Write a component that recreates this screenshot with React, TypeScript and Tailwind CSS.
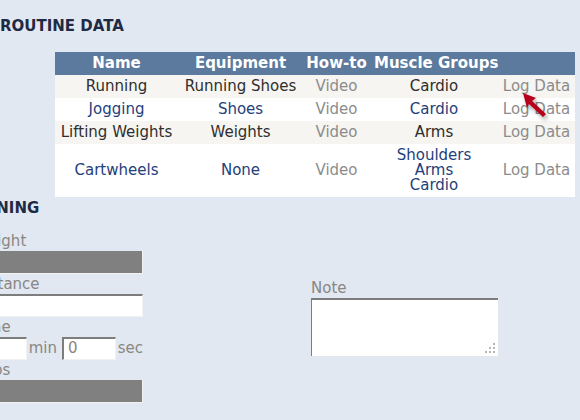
import React from 'react';

const rows = [
  { name: 'Running', equipment: 'Running Shoes', groups: ['Cardio'], odd: true },
  { name: 'Jogging', equipment: 'Shoes', groups: ['Cardio'], odd: false },
  { name: 'Lifting Weights', equipment: 'Weights', groups: ['Arms'], odd: true },
  { name: 'Cartwheels', equipment: 'None', groups: ['Shoulders', 'Arms', 'Cardio'], odd: false },
];

const inset =
  'border-t-2 border-l-2 border-r border-b border-t-[#7d7d7d] border-l-[#7d7d7d] border-r-[#f2f2f2] border-b-[#f2f2f2]';

const Field = ({ label, gray }: { label: string; gray?: boolean }) => (
  <div>
    <div className="h-[20px] leading-[20px] text-[15px] text-[#8a8682]">{label}</div>
    <div className={`h-[23px] w-[169px] ${gray ? 'bg-[#808080] border-r border-b border-[#f2f2f2]' : `bg-white ${inset}`}`} />
  </div>
);

const App = () => {
  return (
    <div className="relative w-[580px] h-[420px] overflow-hidden bg-[#e1e8f2] font-['DejaVu_Sans','Liberation_Sans',sans-serif]">
      <h2 className="pt-[18px] text-[15px] leading-[16px] font-bold text-[#1f2a44]">ROUTINE DATA</h2>

      <table className="mt-[18px] ml-[55px] w-[520px] table-fixed border-collapse text-[15px] leading-[15px] text-center">
        <colgroup>
          <col className="w-[123px]" />
          <col className="w-[125px]" />
          <col className="w-[67px]" />
          <col className="w-[128px]" />
          <col className="w-[77px]" />
        </colgroup>
        <thead>
          <tr className="bg-[#5b7a9d] text-white font-bold">
            <th className="py-1 whitespace-nowrap">Name</th>
            <th className="py-1 whitespace-nowrap">Equipment</th>
            <th className="py-1 whitespace-nowrap">How-to</th>
            <th className="py-1 whitespace-nowrap text-left pl-[4px]">Muscle Groups</th>
            <th className="py-1"></th>
          </tr>
        </thead>
        <tbody>
          {rows.map((r) => (
            <tr key={r.name} className={r.odd ? 'bg-[#f6f5f1] text-[#2e2e2e]' : 'bg-white text-[#24407a]'}>
              <td className="py-1 whitespace-nowrap">{r.name}</td>
              <td className="py-1 whitespace-nowrap">{r.equipment}</td>
              <td className="py-1 text-[#8c8c8c]">Video</td>
              <td className="py-1">
                {r.groups.map((g) => (
                  <div key={g}>{g}</div>
                ))}
              </td>
              <td className="py-1 whitespace-nowrap text-[#8c8c8c]">Log Data</td>
            </tr>
          ))}
        </tbody>
      </table>

      <h2 className="mt-[3px] -ml-[40px] text-[15px] leading-[16px] font-bold text-[#1f2a44]">RUNNING</h2>

      <div className="flex mt-[15px]">
        <div className="-ml-[26px] w-[169px] shrink-0">
          <Field label="Weight" gray />
          <Field label="Distance" />
          <div>
            <div className="h-[20px] leading-[20px] text-[15px] text-[#8a8682]">Time</div>
            <div className="flex items-center h-[23px] text-[15px] text-[#8a8682]">
              <div className={`h-[23px] w-[54px] bg-white ${inset}`} />
              <span className="ml-[2px]">min</span>
              <div className={`ml-[5px] h-[23px] w-[55px] bg-white ${inset} pl-[4px] leading-[19px]`}>0</div>
              <span className="ml-[2px]">sec</span>
            </div>
          </div>
          <Field label="Reps" gray />
        </div>

        <div className="ml-[168px] mt-[47px]">
          <div className="h-[20px] leading-[20px] text-[15px] text-[#8a8682]">Note</div>
          <div className="relative h-[58px] w-[187px] bg-white border-t-2 border-l border-[#7d7d7d]">
            <svg className="absolute right-[2px] bottom-[2px]" width="12" height="12" viewBox="0 0 12 12">
              <rect x="9" y="1" width="2" height="2" fill="#b5b5b5" />
              <rect x="5" y="5" width="2" height="2" fill="#b5b5b5" />
              <rect x="9" y="5" width="2" height="2" fill="#b5b5b5" />
              <rect x="1" y="9" width="2" height="2" fill="#b5b5b5" />
              <rect x="5" y="9" width="2" height="2" fill="#b5b5b5" />
              <rect x="9" y="9" width="2" height="2" fill="#b5b5b5" />
            </svg>
          </div>
        </div>
      </div>

      <svg
        className="absolute left-[518px] top-[90px] drop-shadow-[2px_3px_2px_rgba(0,0,0,0.35)]"
        width="34"
        height="32"
        viewBox="0 0 34 32"
      >
        <polygon points="5,3 18,8 14,11 28,24 25,27 11,14 9,18" fill="#b8001a" />
      </svg>
    </div>
  );
};

export default App;
